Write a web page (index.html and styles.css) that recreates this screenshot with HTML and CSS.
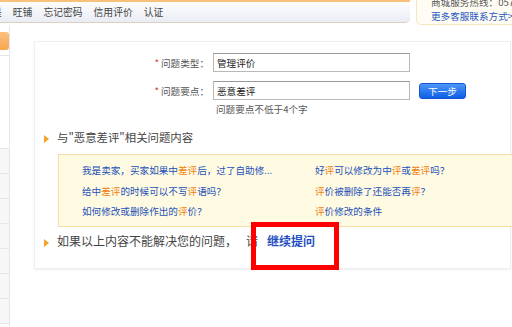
FILE: index.html
```html
<!DOCTYPE html>
<html lang="zh-CN">
<head>
    <meta charset="UTF-8">
    <title>问题提交</title>
    <link rel="stylesheet" href="styles.css">
</head>
<body>
    <div class="top">
        <div class="nav">
            <span class="cut">是</span>
            <a href="#">旺铺</a>
            <a href="#">忘记密码</a>
            <a href="#">信用评价</a>
            <a href="#">认证</a>
        </div>
        <div class="service">
            <p>商城服务热线：0571-88158090</p>
            <p><a href="#">更多客服联系方式&gt;</a></p>
        </div>
    </div>

    <div class="page">
        <ul class="side">
            <li class="on"></li>
            <li class="blank"></li>
            <li></li><li></li><li></li><li></li><li></li><li></li><li></li>
        </ul>

        <main class="panel">
            <div class="form-row">
                <label class="label"><em>*</em> 问题类型：</label>
                <input class="field" type="text" value="管理评价">
            </div>
            <div class="form-row second">
                <label class="label"><em>*</em> 问题要点：</label>
                <input class="field" type="text" value="恶意差评">
                <button class="btn-next">下一步</button>
            </div>
            <p class="hint">问题要点不低于4个字</p>

            <h3 class="sec"><i class="arrow"></i>与"恶意差评"相关问题内容</h3>
            <div class="faq">
                <a href="#">我是卖家，买家如果中<b>差评</b>后，过了自助修...</a>
                <a href="#">好<b>评</b>可以修改为中<b>评</b>或<b>差评</b>吗？</a>
                <a href="#">给中<b>差评</b>的时候可以不写<b>评</b>语吗？</a>
                <a href="#"><b>评</b>价被删除了还能否再<b>评</b>？</a>
                <a href="#">如何修改或删除作出的<b>评</b>价？</a>
                <a href="#"><b>评</b>价修改的条件</a>
            </div>

            <p class="more"><i class="arrow"></i>如果以上内容不能解决您的问题，<span class="ask">请</span><a href="#">继续提问</a></p>
            <div class="mark"></div>
        </main>
    </div>
</body>
</html>
```

FILE: styles.css
```css
body {margin: 0; width: 512px; height: 327px; overflow: hidden; background: #fff;
    font-family: "Noto Sans CJK SC", "Liberation Sans", sans-serif; font-size: 9.6px; color: #444;}
a {text-decoration: none;}
p, h3, ul {margin: 0; padding: 0;}

.top {display: flex; height: 25px;}
.nav {width: 410px; height: 20px; display: flex; align-items: center; gap: 11px;
    border-top: 2px solid #f8c27a; border-bottom: 1px solid #ddd0c2; border-radius: 0 0 5px 0;
    background: linear-gradient(#fdfdfd, #e9edf4); font-size: 9.8px;}
.nav a {color: #444;}
.nav .cut {margin-left: -8px; color: #444;}
.service {margin: -5px 0 0 6px; flex: 1; padding: 0 0 0 14px; height: 29px;
    background: #fffdf3; border: 1px solid #f4e6bd; border-top: 0; border-right: 0; border-radius: 0 0 0 5px;
    font-size: 9.6px; line-height: 14px; white-space: nowrap; overflow: hidden; color: #555;}
.service a {color: #2557c4;}

.page {display: flex;}
.side {list-style: none; width: 9px; border-right: 1px solid #e6e6e6; height: 310px;}
.side li {height: 24px; border-bottom: 1px solid #e6e6e6; background: #f7f7f7;}
.side li.on {margin-top: 7px; height: 18px; border-bottom: 0; border-radius: 0 3px 3px 0;
    background: linear-gradient(#fcc07f, #f9a54f);}
.side li.blank {height: 92px; margin-top: 5px; border-top: 1px solid #e6e6e6; background: #fff;}

.panel {position: relative; margin: 16px 0 0 24px; width: 475px; height: 215px; padding-top: 11px;
    border: 1px solid #eee; box-shadow: 0 1px 2px rgba(0,0,0,.06);}
.form-row {display: flex; align-items: center; height: 19px;}
.form-row.second {margin-top: 9px;}
.label {width: 174px; padding-right: 4px; text-align: right; color: #555;}
.label em {font-style: normal; color: #e4393c;}
.field {box-sizing: border-box; width: 197px; height: 19px; margin: 0; padding: 0 3px;
    border: 1px solid #b8b8b8; border-top-color: #999; font: inherit; color: #222;}
.btn-next {margin-left: 9px; width: 47px; height: 16px; padding: 0; border: 1px solid #1556d6; border-radius: 3px;
    background: linear-gradient(#4d96fa, #0c5fe6); color: #fff; font: inherit;}
.hint {margin: 2px 0 0 181px; color: #555; line-height: 14px;}

.arrow {display: inline-block; width: 0; height: 0; margin: 0 8px 0 0; vertical-align: middle;
    border-left: 5px solid #f3a425; border-top: 4px solid transparent; border-bottom: 4px solid transparent;}
.sec {margin: 13px 0 0 9px; font-size: 11.4px; font-weight: normal; color: #444; line-height: 16px;}
.faq {margin: 9px -12px 0 23px; height: 61px; padding: 5px 0 5px 23px; display: grid;
    grid-template-columns: 233px 1fr; grid-auto-rows: 20.5px; align-items: center;
    background: #fffbe3; border: 1px solid #f6dca5;}
.faq a {color: #2451b8; white-space: nowrap;}
.faq b {font-weight: normal; color: #f07f12;}

.more {margin: 6px 0 0 9px; font-size: 12px; line-height: 16px; color: #444;}
.more .ask {margin-left: 9px;}
.more a {margin-left: 9px; color: #1f4fc2; font-weight: bold;}
.mark {position: absolute; left: 216px; top: 180px; width: 78px; height: 38px; border: 5px solid #f00;}
```
